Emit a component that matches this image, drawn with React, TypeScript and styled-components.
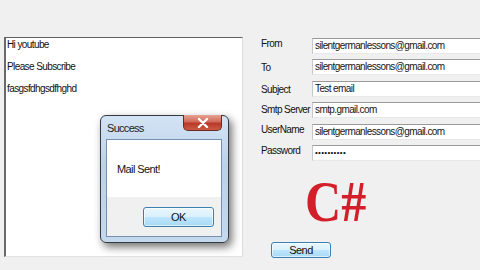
import React from 'react';
import styled, {createGlobalStyle} from 'styled-components';

const Global = createGlobalStyle`
  html, body {
    margin: 0;
    padding: 0;
    background: #f0f0f0;
  }
  body {
    font-family: "Liberation Sans", Arial, sans-serif;
    font-size: 10px;
    letter-spacing: -0.6px;
    color: #111;
  }
`;

const fields = [
    {label: 'From', value: 'silentgermanlessons@gmail.com', shift: 1},
    {label: 'To', value: 'silentgermanlessons@gmail.com', shift: 6},
    {label: 'Subject', value: 'Test email', shift: 6},
    {label: 'Smtp Server', value: 'smtp.gmail.com', shift: 5},
    {label: 'UserName', value: 'silentgermanlessons@gmail.com', shift: 2},
    {label: 'Password', value: '••••••••••', shift: 0},
];

const lines = ['Hi youtube', 'Please Subscribe', 'fasgsfdhgsdfhghd'];

export default function App() {
    return (
        <>
            <Global/>
            <Screen>
                <LeftCol>
                    <TextArea>
                        {lines.map(l => <Line key={l}>{l}</Line>)}
                        <MsgBox>
                            <TitleBar>
                                <Title>Success</Title>
                                <CloseBtn>
                                    <svg width="12" height="10" viewBox="0 0 12 10">
                                        <path d="M2 1 L10 9 M10 1 L2 9" stroke="#fff" strokeWidth="2.4" strokeLinecap="round"/>
                                    </svg>
                                </CloseBtn>
                            </TitleBar>
                            <Inner>
                                <Message>Mail Sent!</Message>
                                <ButtonStrip>
                                    <WinButton width={71} height={20}>OK</WinButton>
                                </ButtonStrip>
                            </Inner>
                        </MsgBox>
                    </TextArea>
                </LeftCol>
                <RightCol>
                    <Form>
                        {fields.map(f => (
                            <React.Fragment key={f.label}>
                                <Label shift={f.shift}>{f.label}</Label>
                                <Input password={f.label === 'Password'}>{f.value}</Input>
                            </React.Fragment>
                        ))}
                    </Form>
                    <Logo>C#</Logo>
                    <SendRow>
                        <WinButton width={60} height={16}>Send</WinButton>
                    </SendRow>
                </RightCol>
            </Screen>
        </>
    );
}

const Screen = styled.div`
  width: 480px;
  height: 270px;
  overflow: hidden;
  display: flex;
  flex-direction: row;
`;

const LeftCol = styled.div`
  width: 261px;
  flex-shrink: 0;
  padding: 37px 0 0 4px;
  box-sizing: border-box;
`;

const TextArea = styled.div`
  position: relative;
  width: 239px;
  height: 220px;
  box-sizing: border-box;
  background: #fff;
  border-top: 1px solid #5e5e5e;
  border-left: 2px solid #6a6a6a;
  border-right: 1px solid #dcdcdc;
  border-bottom: 1px solid #e2e2e2;
  padding: 1px 0 0 1px;
`;

const Line = styled.div`
  line-height: 12px;
  margin-bottom: 10px;
  white-space: nowrap;
`;

const MsgBox = styled.div`
  position: absolute;
  left: 94px;
  top: 77px;
  width: 129px;
  height: 128px;
  box-sizing: border-box;
  border: 1px solid #343a40;
  border-radius: 6px;
  background: linear-gradient(#d3e3f4, #bcd2ea 40%, #c4d8ee);
  box-shadow: 3px 4px 8px rgba(0, 0, 0, 0.55);
  padding: 0 6px 5px 5px;
  display: flex;
  flex-direction: column;
`;

const TitleBar = styled.div`
  position: relative;
  height: 23px;
  display: flex;
  align-items: center;
`;

const Title = styled.span`
  font-family: "Liberation Sans", Arial, sans-serif;
  font-size: 11px;
  letter-spacing: -0.7px;
  color: #1a1a1a;
  padding-left: 1px;
  padding-top: 1px;
`;

const CloseBtn = styled.div`
  position: absolute;
  right: 0;
  top: -1px;
  width: 39px;
  height: 16px;
  box-sizing: border-box;
  border: 1px solid #6b2a20;
  border-top: none;
  border-radius: 0 0 5px 5px;
  background: linear-gradient(#e8a293, #d06a58 45%, #b8392a 55%, #cc5a44);
  display: flex;
  align-items: center;
  justify-content: center;
`;

const Inner = styled.div`
  flex: 1;
  border: 1px solid #7690ae;
  background: #f0f0f0;
  display: flex;
  flex-direction: column;
`;

const Message = styled.div`
  height: 57px;
  background: #fff;
  font-size: 11px;
  letter-spacing: -0.6px;
  padding-left: 10px;
  display: flex;
  align-items: center;
`;

const ButtonStrip = styled.div`
  display: flex;
  justify-content: flex-end;
  padding: 10px 7px 0 0;
`;

const WinButton = styled.div<{ width: number, height: number }>`
  width: ${(props) => props.width}px;
  height: ${(props) => props.height}px;
  box-sizing: border-box;
  border: 1px solid #3c7fb1;
  border-radius: 3px;
  background: linear-gradient(#eaf6fd, #d9f0fc 50%, #bee6fd 51%, #a7d9f5);
  box-shadow: inset 0 0 0 1px rgba(255, 255, 255, 0.6);
  font-size: 11px;
  letter-spacing: -0.5px;
  display: flex;
  align-items: center;
  justify-content: center;
`;

const RightCol = styled.div`
  flex: 1;
  padding-top: 38px;
  display: flex;
  flex-direction: column;
  min-width: 0;
`;

const Form = styled.div`
  display: grid;
  grid-template-columns: 51px 1fr;
  grid-auto-rows: 16px;
  row-gap: 5.4px;
`;

const Label = styled.div<{ shift: number }>`
  padding-top: ${(props) => props.shift - 3}px;
  white-space: nowrap;
  line-height: 12px;
`;

const Input = styled.div<{ password: boolean }>`
  height: 16px;
  box-sizing: border-box;
  background: #fff;
  border-top: 1px solid #9a9a9a;
  border-left: 1px solid #c8c8c8;
  border-bottom: 1px solid #e8e8e8;
  padding: 0 0 0 2px;
  line-height: 13px;
  white-space: nowrap;
  font-size: ${(props) => props.password ? '8px' : '10px'};
  letter-spacing: ${(props) => props.password ? '0.3px' : '-0.6px'};
  color: #151515;
`;

const Logo = styled.div`
  margin: 12px 0 0 44px;
  font-family: "Liberation Serif", "Times New Roman", serif;
  font-weight: bold;
  font-size: 57px;
  line-height: 57px;
  letter-spacing: 0;
  color: #d21f29;
  transform: scaleX(0.88);
  transform-origin: left center;
`;

const SendRow = styled.div`
  margin: 12px 0 0 10px;
  display: flex;
`;
